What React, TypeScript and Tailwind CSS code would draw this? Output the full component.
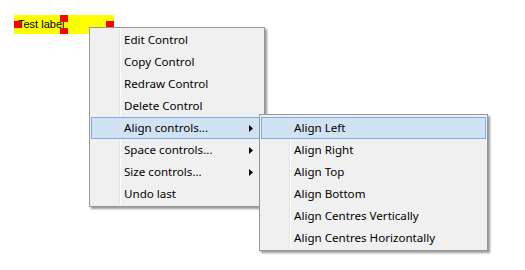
import React from "react";

const main = [
  { t: "Edit Control" },
  { t: "Copy Control" },
  { t: "Redraw Control" },
  { t: "Delete Control" },
  { t: "Align controls...", sub: true, hl: true },
  { t: "Space controls...", sub: true },
  { t: "Size controls...", sub: true },
  { t: "Undo last" },
];

const sub = [
  { t: "Align Left", hl: true },
  { t: "Align Right" },
  { t: "Align Top" },
  { t: "Align Bottom" },
  { t: "Align Centres Vertically" },
  { t: "Align Centres Horizontally" },
];

function Arrow() {
  return (
    <svg width="4" height="7" viewBox="0 0 4 7" className="ml-auto mr-[10px]">
      <path d="M0 0 L4 3.5 L0 7 Z" fill="#000" />
    </svg>
  );
}

function Item({ t, sub: hasSub, hl }: { t: string; sub?: boolean; hl?: boolean }) {
  return (
    <div
      className={
        "relative h-[22px] flex items-center pl-[33px] mx-[1px] " +
        (hl ? "bg-[#d1e2f2] outline outline-1 -outline-offset-1 outline-[#78aee5]" : "")
      }
    >
      <span className="leading-none">{t}</span>
      {hasSub && <Arrow />}
    </div>
  );
}

function Menu({ items, className }: { items: { t: string; sub?: boolean; hl?: boolean }[]; className: string }) {
  return (
    <div
      className={
        "absolute bg-[#f0f0f0] border border-[#979797] py-[1px] shadow-[2px_2px_2px_rgba(0,0,0,0.4)] " + className
      }
      style={{ fontFamily: '"Noto Sans", sans-serif', fontSize: "11.6px", color: "#000" }}
    >
      <div className="absolute left-[29px] top-[1px] bottom-[1px] w-[1px] bg-[#e2e3e3]" />
      <div className="absolute left-[30px] top-[1px] bottom-[1px] w-[1px] bg-[#ffffff]" />
      <div className="relative flex flex-col">
        {items.map((i) => (
          <Item key={i.t} {...i} />
        ))}
      </div>
    </div>
  );
}

export default function App() {
  return (
    <div className="relative w-[525px] h-[270px] bg-white overflow-hidden">
      <div className="absolute left-[14px] top-[15px] w-[100px] h-[19px] bg-[#ffff00] flex items-center pl-[4px]">
        <span
          className="text-[11px] leading-[13px] text-black"
          style={{ fontFamily: '"Liberation Sans", sans-serif' }}
        >
          Test label
        </span>
        <div className="absolute left-0 top-[6px] w-[7px] h-[7px] bg-[#ff0000]" />
        <div className="absolute left-[46px] top-0 w-[8px] h-[7px] bg-[#ff0000]" />
        <div className="absolute left-[46px] top-[13px] w-[8px] h-[6px] bg-[#ff0000]" />
        <div className="absolute left-[92px] top-[6px] w-[8px] h-[7px] bg-[#ff0000]" />
      </div>
      <Menu items={main} className="left-[89px] top-[27px] w-[176px]" />
      <Menu items={sub} className="left-[259px] top-[114px] w-[229px] pt-[2px]" />
    </div>
  );
}
